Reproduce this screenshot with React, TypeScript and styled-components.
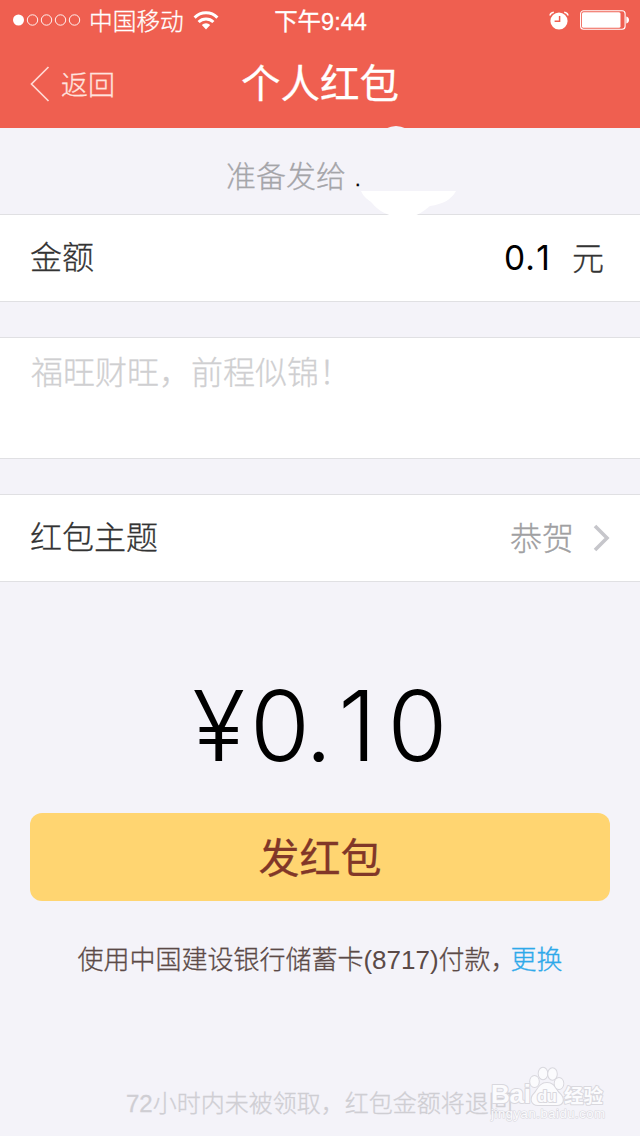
import React from "react";
import styled, { createGlobalStyle } from "styled-components";

const Global = createGlobalStyle`
  * { box-sizing: border-box; }
  body { margin: 0; background: #f4f3f9; }
`;

const Screen = styled.main`
  position: relative;
  display: flex;
  flex-direction: column;
  width: 640px;
  height: 1136px;
  overflow: hidden;
  background: #f4f3f9;
  font-family: "Liberation Sans", "Noto Sans CJK SC", sans-serif;
  font-weight: 300;
  color: #333;
  -webkit-text-stroke: 0.3px currentColor;
`;

const Header = styled.header`
  height: 128px;
  background: #ef5f50;
  color: #fff;
`;

const StatusBar = styled.div`
  display: grid;
  grid-template-columns: 1fr auto 1fr;
  align-items: center;
  height: 40px;
  padding: 0 10px 0 12px;
  font-size: 24px;
  line-height: 36px;
`;

const StatusGroup = styled.div<{ $end?: boolean }>`
  display: flex;
  align-items: center;
  justify-content: ${(p) => (p.$end ? "flex-end" : "flex-start")};
  gap: ${(p) => (p.$end ? 11 : 9)}px;
`;

const Carrier = styled.span`
  padding-top: 3px;
  margin-left: -1px;
  font-size: 23.7px;
`;

const Clock = styled.time`
  padding: 3px 1px 0 0;
  font-size: 23.5px;
  font-weight: 400;
`;

const NavBar = styled.nav`
  display: grid;
  grid-template-columns: 1fr auto 1fr;
  align-items: center;
  height: 88px;
  padding: 0 30px;
`;

const BackButton = styled.a`
  display: flex;
  align-items: center;
  gap: 11px;
  font-size: 27px;
  line-height: 36px;
  color: #ffe3df;
`;

const BackLabel = styled.span`
  padding-top: 4px;
`;

const Title = styled.h1`
  margin: 0;
  font-size: 39.5px;
  font-weight: 400;
  line-height: 60px;
  -webkit-text-stroke-width: 0.3px;
`;

const Recipient = styled.section`
  position: relative;
  display: flex;
  height: 86px;
  padding: 27px 0 0 226px;
  font-size: 30px;
  line-height: 44px;
  color: #a5a5a9;
`;

const NameStart = styled.span`
  width: 8px;
  margin-left: 9px;
  font-size: 20px;
  line-height: 48px;
  color: #000;
`;

const NameMask = styled.svg`
  position: absolute;
  left: 350px;
  top: -8px;
`;

const Row = styled.section`
  display: flex;
  align-items: center;
  height: 88px;
  padding: 0 30px;
  border: solid #e0e0e3;
  border-width: 1px 0;
  background: #fff;
  font-size: 32px;
  line-height: 48px;
`;

const Label = styled.span`
  flex: 1;
`;

const Amount = styled.span`
  margin-right: 22px;
  font-family: Inter, sans-serif;
  font-size: 33.5px;
  font-weight: 400;
  color: #000;
  -webkit-text-stroke-width: 0;
`;

const Unit = styled.span`
  padding-top: 2px;
  margin-right: 6px;
`;

const Choice = styled.span`
  padding-top: 2px;
  margin-right: 19px;
  color: #a0a0a2;
`;

const Message = styled.section`
  height: 122px;
  margin: 35px 0;
  padding: 11px 31px;
  border: solid #e0e0e3;
  border-width: 1px 0;
  background: #fff;
  font-size: 32px;
  line-height: 48px;
  color: #cfcfd1;
`;

const Total = styled.div`
  height: 231px;
  padding-top: 84px;
  font-family: Inter, sans-serif;
  font-size: 97px;
  font-weight: 300;
  line-height: 120px;
  text-align: center;
  white-space: nowrap;
  color: #000;
  -webkit-text-stroke-width: 0;
`;

const Tracked = styled.span<{ $by: number }>`
  letter-spacing: ${(p) => p.$by}px;
`;

const SendButton = styled.button`
  height: 88px;
  margin: 0 30px;
  padding: 4px 0 0;
  border: 0;
  border-radius: 12px;
  background: #ffd571;
  font-family: inherit;
  font-size: 41px;
  font-weight: 400;
  line-height: 84px;
  color: #813728;
  -webkit-text-stroke: 0.3px #813728;
`;

const Payment = styled.p`
  margin: 39px 0 0;
  font-size: 26px;
  line-height: 40px;
  text-align: center;
  white-space: nowrap;
  color: #5b4a47;
`;

const CardNumber = styled.span`
  -webkit-text-stroke-width: 0;
`;

const Change = styled.a`
  color: #2ea9ea;
`;

const Notice = styled.p`
  margin: 104px 0 0 126px;
  font-size: 24px;
  line-height: 40px;
  white-space: nowrap;
  color: #cfced3;
`;

const Watermark = styled.svg`
  position: absolute;
  left: 480px;
  top: 1060px;
`;

const SignalDots = () => (
  <svg width="69" height="14" viewBox="0 0 69 14" fill="none" stroke="#fff">
    <circle cx="6.5" cy="7" r="5.5" fill="#fff" stroke="none" />
    {[20.5, 34.5, 48.5, 62.5].map((x) => (
      <circle key={x} cx={x} cy="7" r="5.2" strokeWidth="0.9" />
    ))}
  </svg>
);

const Wifi = () => (
  <svg width="26" height="20" viewBox="0 0 26 20" fill="none" stroke="#fff" strokeWidth="3">
    <path d="M1.600 7.600a16.100 16.100 0 0 1 22.800 0" />
    <path d="M5.600 12a10.500 10.500 0 0 1 14.800 0" />
    <path d="M13 19.500l-4.200-4.600a6 6 0 0 1 8.400 0z" fill="#fff" stroke="none" />
  </svg>
);

const Alarm = () => (
  <svg width="20" height="19" viewBox="0 0 20 19" fill="none">
    <circle cx="10" cy="10" r="8.600" fill="#fff" />
    <path d="M10.600 5v5.300H5.600" stroke="#ef5f50" strokeWidth="1.500" />
    <path d="M1 4.500Q1.500 1.500 4.800 1.200M19 4.500Q18.500 1.500 15.200 1.200" stroke="#fff" strokeWidth="1.500" />
  </svg>
);

const Battery = () => (
  <svg width="50" height="20" viewBox="0 0 50 20" fill="none">
    <rect x="0.600" y="0.800" width="44.500" height="18.400" rx="3" stroke="#fff" strokeWidth="1.100" />
    <rect x="2" y="2.200" width="38.500" height="15.600" rx="1.500" fill="#fff" />
    <path d="M46.300 6.500c3.600.5 3.600 6.500 0 7z" fill="#fff" />
  </svg>
);

export default function App() {
  return (
    <>
      <Global />
      <Screen>
        <Header>
          <StatusBar>
            <StatusGroup>
              <SignalDots />
              <Carrier>中国移动</Carrier>
              <Wifi />
            </StatusGroup>
            <Clock>下午9:44</Clock>
            <StatusGroup $end>
              <Alarm />
              <Battery />
            </StatusGroup>
          </StatusBar>
          <NavBar>
            <BackButton>
              <svg width="20" height="36" viewBox="0 0 20 36" fill="none" stroke="#ffd9d4" strokeWidth="1.700">
                <path d="M18.500 1L1.500 18l17 17" />
              </svg>
              <BackLabel>返回</BackLabel>
            </BackButton>
            <Title>个人红包</Title>
          </NavBar>
        </Header>
        <Recipient>
          准备发给
          <NameStart>.</NameStart>
          <NameMask width="110" height="96" viewBox="0 0 110 96">
            <path d="M36 8.500Q46 3.500 56 8.500z" fill="#f4f3f9" />
            <path d="M11 71H106C101 80 93 84 80 86C73 92 69 94 64 96H42C33 93 27 89 22 83C18 79 14 78 11 71z" fill="#fff" />
          </NameMask>
        </Recipient>
        <Row>
          <Label>金额</Label>
          <Amount>
            0<Tracked $by={1.5}>.</Tracked>1
          </Amount>
          <Unit>元</Unit>
        </Row>
        <Message>福旺财旺，前程似锦！</Message>
        <Row>
          <Label>红包主题</Label>
          <Choice>恭贺</Choice>
          <svg width="17" height="28" viewBox="0 0 17 28" fill="none" stroke="#c6c6cb" strokeWidth="3.600">
            <path d="M2 2l12 12L2 26" />
          </svg>
        </Row>
        <Total>
          <Tracked $by={5}>¥</Tracked>
          <Tracked $by={-5}>0</Tracked>
          <Tracked $by={6}>.</Tracked>
          <Tracked $by={11}>1</Tracked>0
        </Total>
        <SendButton>发红包</SendButton>
        <Payment>
          使用中国建设银行储蓄卡<CardNumber>(8717)</CardNumber>付款<Tracked $by={-6}>，</Tracked>
          <Change>更换</Change>
        </Payment>
        <Notice>72小时内未被领取，红包金额将退回</Notice>
        <Watermark width="150" height="66" viewBox="0 0 150 66">
          <g fill="#fbfbfd" stroke="#d9d8de" strokeWidth="2" strokeLinejoin="round" paintOrder="stroke" fontFamily="Liberation Sans, Noto Sans CJK SC, sans-serif" fontWeight="700">
            <text x="11" y="43" fontSize="26" textLength="40">Bai</text>
            <path d="M67 23c8 0 8 7 13 11 5 5 3 11-3 11H58c-7 0-8-7-4-11 4-4 5-11 13-11z" />
            <ellipse cx="54.500" cy="21.500" rx="4.300" ry="5.500" />
            <ellipse cx="63" cy="13.500" rx="4.300" ry="5.800" />
            <ellipse cx="72.500" cy="14" rx="4.300" ry="5.800" />
            <ellipse cx="79" cy="23.500" rx="4.300" ry="5.500" />
            <text x="57" y="42" fontSize="17" textLength="20">du</text>
            <text x="84" y="43" fontSize="19.500" textLength="39">经验</text>
            <text x="11" y="58" fontSize="13" fontWeight="400" strokeWidth="1.200" textLength="114">jingyan.baidu.com</text>
          </g>
        </Watermark>
      </Screen>
    </>
  );
}
